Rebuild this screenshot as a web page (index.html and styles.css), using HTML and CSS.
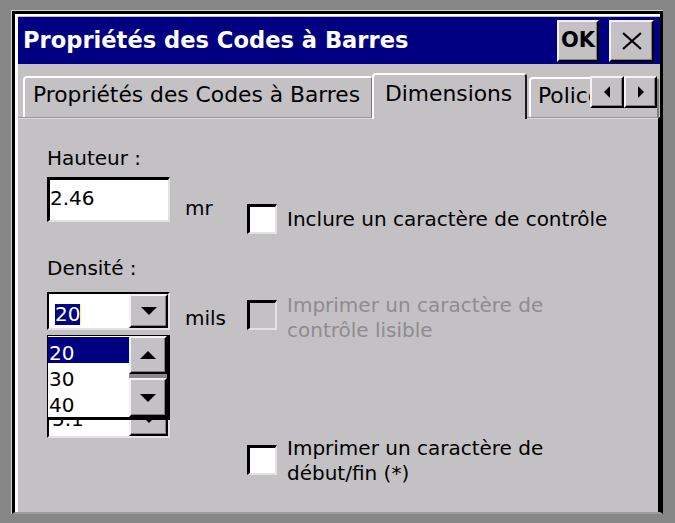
FILE: index.html
```html
<!DOCTYPE html>
<html lang="fr">
<head>
<meta charset="utf-8">
<title>Propriétés des Codes à Barres</title>
<link rel="stylesheet" href="styles.css">
</head>
<body>
<div class="window">
  <div class="frame">
    <div class="titlebar">
      <span class="title">Propriétés des Codes à Barres</span>
      <div class="tbtn raised ok">OK</div>
      <div class="tbtn raised close">
        <svg width="22" height="18" viewBox="0 0 22 18"><path d="M2 1 L20 17 M20 1 L2 17" stroke="#000" stroke-width="2.2" fill="none"/></svg>
      </div>
    </div>
    <div class="tabs">
      <div class="tab t1">Propriétés des Codes à Barres</div>
      <div class="tab sel">Dimensions</div>
      <div class="tab t3">Polices</div>
      <div class="arrows">
        <div class="abtn raised"><svg width="8" height="12" viewBox="0 0 8 12"><polygon points="7,0 7,12 1,6" fill="#000"/></svg></div>
        <div class="abtn raised"><svg width="8" height="12" viewBox="0 0 8 12"><polygon points="1,0 1,12 7,6" fill="#000"/></svg></div>
      </div>
    </div>
    <div class="panel">
      <div class="left">
        <div class="lbl">Hauteur :</div>
        <div class="field">
          <div class="input">2.46</div>
          <div class="unit u1">mr</div>
        </div>
        <div class="lbl lbl2">Densité :</div>
        <div class="field f2">
          <div class="combo">
            <div class="val"><span class="hl">20</span></div>
            <div class="dbtn raised"><svg width="16" height="8" viewBox="0 0 16 8"><polygon points="0,0 16,0 8,8" fill="#000"/></svg></div>
          </div>
          <div class="unit">mils</div>
          <div class="list">
            <div class="items">
              <div class="item isel">20</div>
              <div class="item">30</div>
              <div class="item">40</div>
            </div>
            <div class="sbar">
              <div class="sbtn up raised"><svg width="16" height="8" viewBox="0 0 16 8"><polygon points="0,8 16,8 8,0" fill="#000"/></svg></div>
              <div class="sbtn down raised"><svg width="16" height="8" viewBox="0 0 16 8"><polygon points="0,0 16,0 8,8" fill="#000"/></svg></div>
            </div>
          </div>
        </div>
        <div class="field f3">
          <div class="combo">
            <div class="val v3">5.1</div>
            <div class="dbtn raised"><svg width="16" height="8" viewBox="0 0 16 8"><polygon points="0,0 16,0 8,8" fill="#000"/></svg></div>
          </div>
        </div>
      </div>
      <div class="right">
        <div class="chk c1">
          <div class="box"></div>
          <div class="txt">Inclure un caractère de contrôle</div>
        </div>
        <div class="chk c2 dis">
          <div class="box"></div>
          <div class="txt">Imprimer un caractère de<br>contrôle lisible</div>
        </div>
        <div class="chk c3">
          <div class="box"></div>
          <div class="txt">Imprimer un caractère de<br>début/fin (*)</div>
        </div>
      </div>
    </div>
  </div>
</div>
</body>
</html>
```
FILE: styles.css
```css
* { box-sizing: border-box; }
html, body { margin: 0; padding: 0; }
body {
  width: 675px;
  height: 523px;
  overflow: hidden;
  background: #878787;
  font-family: "DejaVu Sans", "Liberation Sans", sans-serif;
  font-size: 20px;
  color: #000;
}
.window {
  margin: 10px 0 0 11px;
  width: 652px;
  height: 504px;
  border-top: 1px solid #d2d2d2;
  border-left: 1px solid #d2d2d2;
}
.frame {
  height: 503px;
  display: flex;
  flex-direction: column;
  background: #c3c1c4;
  border-style: solid;
  border-color: #000 #000 #9c9c9c #000;
  border-width: 3px 3px 2px 3px;
  padding: 3px 0 0 3px;
  box-shadow: inset 3px 2px 0 #fff;
}
.raised {
  background: #c3c1c4;
  border: 2px solid;
  border-color: #f2f2f2 #000 #000 #f2f2f2;
  box-shadow: inset -1px -1px 0 #7f7f7f;
  display: flex;
  align-items: center;
  justify-content: center;
}
.titlebar {
  flex: none;
  height: 47px;
  background: #000080;
  display: flex;
  align-items: center;
  padding: 0 6px 0 5px;
}
.title {
  flex: 1;
  color: #fff;
  font-weight: bold;
  font-size: 22.6px;
  line-height: 27px;
  white-space: nowrap;
}
.tbtn { height: 42px; }
.ok { width: 42px; font-weight: bold; font-size: 21px; line-height: 25px; }
.close { width: 45px; margin-left: 10px; }

.tabs {
  flex: none;
  position: relative;
  z-index: 1;
  height: 55px;
  margin-bottom: -2px;
  display: flex;
  align-items: flex-end;
  padding-left: 5px;
  overflow: hidden;
}
.tab {
  flex: none;
  height: 41px;
  margin-bottom: 2px;
  border-style: solid;
  border-width: 2px 2px 0 2px;
  border-color: #fff #7c7c7c transparent #fff;
  border-radius: 4px 4px 0 0;
  font-size: 21.8px;
  line-height: 26px;
  padding: 4px 0 0 8px;
  white-space: nowrap;
}
.t1 { width: 350px; }
.tab.sel {
  width: 155px;
  height: 46px;
  margin: 0 0 0 -1px;
  padding: 6px 0 0 11px;
  border-right-color: #1a1a1a;
  background: #c3c1c4;
  position: relative;
  z-index: 2;
}
.t3 { margin-left: 2px; height: 40px; width: 130px; padding-left: 7px; }
.arrows {
  position: absolute;
  top: 12px;
  right: 3px;
  z-index: 3;
  display: flex;
}
.abtn { width: 34px; height: 32px; }
.abtn + .abtn { width: 33px; }

.panel {
  flex: 1;
  display: flex;
  border-top: 1px solid #9a989b;
  box-shadow: inset 0 1px 0 #dcdadd;
  padding-top: 1px;
  border-right: 2px solid #000;
}
.left { flex: none; width: 229px; padding: 27px 0 0 29px; }
.lbl { height: 24px; line-height: 24px; }
.lbl2 { margin-top: 34px; }
.field { display: flex; align-items: flex-end; margin-top: 7px; }
.f2 { position: relative; margin-top: 12px; }
.f3 { margin-top: 70px; }
.input {
  width: 123px;
  height: 45px;
  background: #fff;
  border-style: solid;
  border-width: 3px 2px 2px 3px;
  border-color: #000 #e2e2e2 #e2e2e2 #000;
  padding-top: 6px;
  line-height: 24px;
}
.unit { margin-left: 15px; line-height: 24px; }
.u1 { margin-bottom: 2px; }
.combo {
  width: 123px;
  height: 38px;
  display: flex;
  background: #fff;
  border-style: solid;
  border-width: 2px;
  border-color: #000 #e2e2e2 #e2e2e2 #000;
}
.val { flex: 1; padding: 8px 0 0 6px; }
.v3 { padding: 5px 0 0 3px; line-height: 24px; }
.hl {
  display: inline-block;
  height: 21px;
  line-height: 21px;
  background: #000080;
  color: #fff;
  border-right: 1px solid #f6f67a;
}
.dbtn { width: 39px; height: 34px; }

.list {
  position: absolute;
  left: 0;
  top: 43px;
  z-index: 5;
  width: 123px;
  height: 85px;
  display: flex;
  background: #fff;
  border-style: solid;
  border-color: #000;
  border-width: 1px 3px 3px 1px;
}
.items { width: 81px; padding-top: 1px; }
.item { height: 26px; line-height: 19px; padding: 7px 0 0 1px; }
.isel { background: #000080; color: #fff; }
.sbar { width: 38px; display: flex; flex-direction: column; background: #8a888b; }
.up { height: 38px; margin-bottom: 4px; }
.down { height: 39px; }

.right { flex: 1; }
.chk { display: flex; align-items: flex-start; }
.box {
  flex: none;
  width: 30px;
  height: 30px;
  margin-right: 10px;
  background: #fff;
  border-style: solid;
  border-width: 3px 2px 2px 3px;
  border-color: #000 #e2e2e2 #e2e2e2 #000;
}
.txt { line-height: 25px; white-space: nowrap; }
.c1 { margin-top: 85px; align-items: center; }
.c2 { margin-top: 59px; }
.c2 .box { margin-top: 7px; }
.c3 { margin-top: 93px; }
.c3 .box { margin-top: 9px; }
.dis .box { background: transparent; }
.dis .txt { color: #8e8c8f; }
```
